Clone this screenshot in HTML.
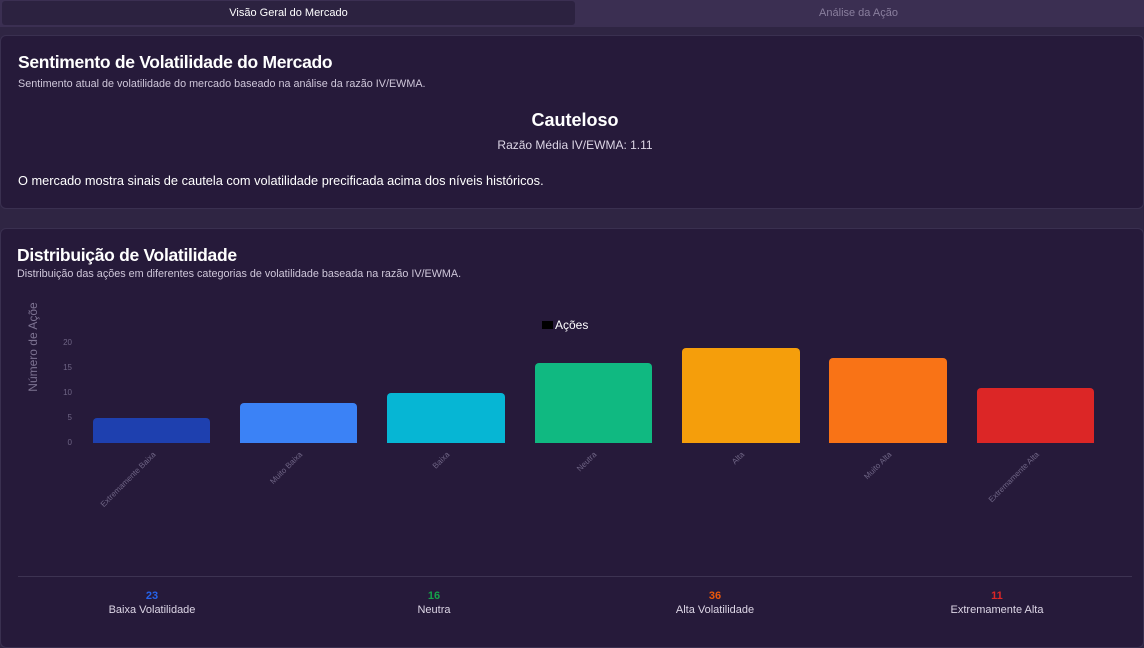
<!DOCTYPE html>
<html><head><meta charset="utf-8"><style>
*{margin:0;padding:0;box-sizing:border-box}
body{width:1144px;height:635px;overflow:hidden;background:#2f2543;font-family:"Liberation Sans",sans-serif;color:#fff;position:relative}
.tabs{position:absolute;left:0;top:0;width:1144px;height:27px;background:#3b2f52}
.tab{position:absolute;top:1px;height:24px;font-size:11px;line-height:24px;text-align:center}
.card{position:absolute;left:0;width:1144px;background:#261a3a;border:1px solid #3a3050;border-radius:6px}
.abs{position:absolute}
.bar{position:absolute;border-radius:4px 4px 0 0}
.xl{position:absolute;font-size:8px;color:#6f6585;transform:rotate(-45deg);transform-origin:right top;white-space:nowrap}
.yl{position:absolute;font-size:8px;color:#6f6585;text-align:right;width:20px}
.st{position:absolute;top:590px;text-align:center;width:200px}
.st b{display:block;font-size:11px}
.st span{display:block;font-size:11px;color:#ddd6e6;margin-top:2px}
</style></head><body>
<div class="tabs">
<div class="tab" style="left:2px;width:573px;background:#2c2240;border-radius:3px;color:#fff">Visão Geral do Mercado</div>
<div class="tab" style="left:575px;width:567px;color:#8a7f9e">Análise da Ação</div>
</div>
<div class="card" style="top:35px;height:174px">
<div class="abs" style="left:17px;top:16px;font-size:17.5px;font-weight:bold;letter-spacing:-0.3px">Sentimento de Volatilidade do Mercado</div>
<div class="abs" style="left:17px;top:42px;font-size:10.8px;color:#cfc7da">Sentimento atual de volatilidade do mercado baseado na análise da razão IV/EWMA.</div>
<div class="abs" style="left:0;width:1148px;top:74px;text-align:center;font-size:18px;font-weight:bold">Cauteloso</div>
<div class="abs" style="left:0;width:1148px;top:102px;text-align:center;font-size:12px;color:#ddd6e6">Razão Média IV/EWMA: 1.11</div>
<div class="abs" style="left:17px;top:137px;font-size:12.8px">O mercado mostra sinais de cautela com volatilidade precificada acima dos níveis históricos.</div>
</div>
<div class="card" style="top:228px;height:420px"></div>
<div class="abs" style="left:17px;top:245px;font-size:17.5px;font-weight:bold;letter-spacing:-0.3px">Distribuição de Volatilidade</div>
<div class="abs" style="left:17px;top:268px;font-size:10.8px;color:#cfc7da">Distribuição das ações em diferentes categorias de volatilidade baseada na razão IV/EWMA.</div>
<div class="abs" style="top:340px;font-size:12px;color:#7d7392;transform:rotate(-90deg);transform-origin:center;width:100px;text-align:center;height:14px;overflow:hidden;left:-17px">Número de Açõe</div>
<div class="abs" style="left:542px;top:321px;width:11px;height:8px;background:#000"></div>
<div class="abs" style="left:555px;top:318px;font-size:12px">Ações</div>
<div class="yl" style="left:52px;top:338px">20</div>
<div class="yl" style="left:52px;top:363px">15</div>
<div class="yl" style="left:52px;top:388px">10</div>
<div class="yl" style="left:52px;top:413px">5</div>
<div class="yl" style="left:52px;top:438px">0</div>
<div class="bar" style="left:93px;width:117px;top:418px;height:25px;background:#1e40af"></div>
<div class="bar" style="left:240px;width:117px;top:403px;height:40px;background:#3b82f6"></div>
<div class="bar" style="left:387px;width:118px;top:393px;height:50px;background:#06b6d4"></div>
<div class="bar" style="left:535px;width:117px;top:363px;height:80px;background:#10b981"></div>
<div class="bar" style="left:682px;width:118px;top:348px;height:95px;background:#f59e0b"></div>
<div class="bar" style="left:829px;width:118px;top:358px;height:85px;background:#f97316"></div>
<div class="bar" style="left:977px;width:117px;top:388px;height:55px;background:#dc2626"></div>
<div class="xl" style="right:993px;top:450px">Extremamente Baixa</div>
<div class="xl" style="right:846px;top:450px">Muito Baixa</div>
<div class="xl" style="right:699px;top:450px">Baixa</div>
<div class="xl" style="right:552px;top:450px">Neutra</div>
<div class="xl" style="right:404px;top:450px">Alta</div>
<div class="xl" style="right:257px;top:450px">Muito Alta</div>
<div class="xl" style="right:109px;top:450px">Extremamente Alta</div>
<div class="abs" style="left:18px;top:576px;width:1114px;height:1px;background:#3d3352"></div>
<div class="st" style="left:52px"><b style="color:#2563eb">23</b><span>Baixa Volatilidade</span></div>
<div class="st" style="left:334px"><b style="color:#16a34a">16</b><span>Neutra</span></div>
<div class="st" style="left:615px"><b style="color:#ea580c">36</b><span>Alta Volatilidade</span></div>
<div class="st" style="left:897px"><b style="color:#dc2626">11</b><span>Extremamente Alta</span></div>
</body></html>
